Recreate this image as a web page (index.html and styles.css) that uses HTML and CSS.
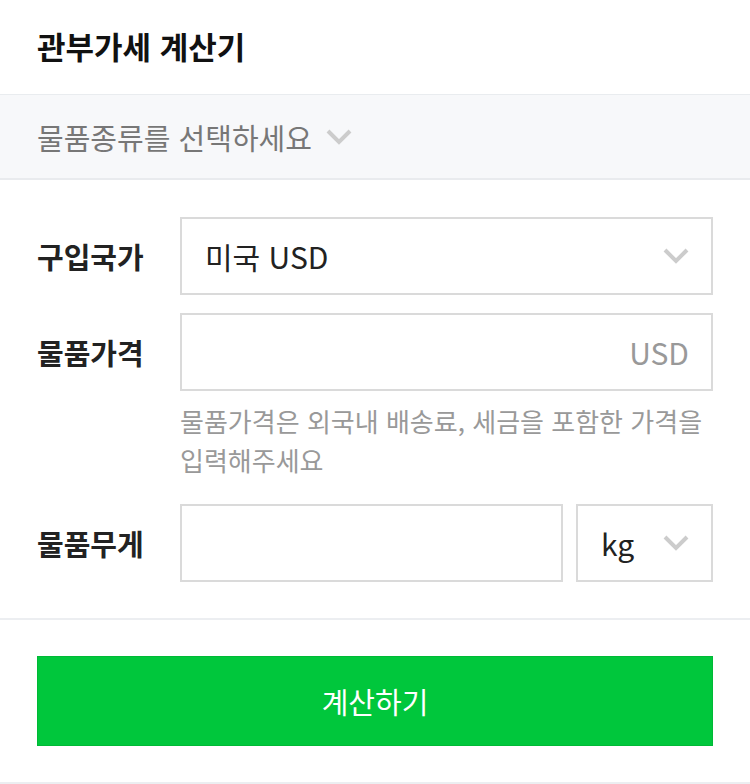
FILE: index.html
```html
<!DOCTYPE html>
<html lang="ko">
<head>
    <meta charset="UTF-8">
    <meta name="viewport" content="width=device-width, initial-scale=1.0">
    <title>관부가세 계산기</title>
    <link rel="stylesheet" href="styles.css">
</head>
<body>
    <header class="top">
        <h1>관부가세 계산기</h1>
    </header>

    <div class="category">
        <span>물품종류를 선택하세요</span>
        <svg class="chevron" width="26" height="16" viewBox="0 0 26 16"><path d="M2 2 L13 13 L24 2" fill="none" stroke="#cccccc" stroke-width="4"/></svg>
    </div>

    <section class="form">
        <div class="row">
            <label class="label">구입국가</label>
            <div class="box select">
                <span class="value">미국 USD</span>
                <svg class="chevron" width="26" height="16" viewBox="0 0 26 16"><path d="M2 2 L13 13 L24 2" fill="none" stroke="#cccccc" stroke-width="4"/></svg>
            </div>
        </div>

        <div class="row">
            <label class="label">물품가격</label>
            <div class="box input">
                <span class="unit">USD</span>
            </div>
        </div>
        <p class="help">물품가격은 외국내 배송료, 세금을 포함한 가격을 입력해주세요</p>

        <div class="row">
            <label class="label">물품무게</label>
            <div class="weight">
                <div class="box input"></div>
                <div class="box select small">
                    <span class="value">kg</span>
                    <svg class="chevron" width="26" height="16" viewBox="0 0 26 16"><path d="M2 2 L13 13 L24 2" fill="none" stroke="#cccccc" stroke-width="4"/></svg>
                </div>
            </div>
        </div>
    </section>

    <div class="actions">
        <button class="calc">계산하기</button>
    </div>
</body>
</html>
```

FILE: styles.css
```css
* {
    margin: 0;
    padding: 0;
    box-sizing: border-box;
    font-family: "Noto Sans CJK KR", "Noto Sans", sans-serif;
}

body {
    background: #fff;
    color: #222;
}

.top {
    height: 95px;
    padding: 0 37px;
    display: flex;
    align-items: center;
    border-bottom: 1px solid #e9ecef;
}

.top h1 {
    font-size: 31px;
    font-weight: 700;
    color: #111;
    margin-top: -4px;
}

.category {
    height: 85px;
    padding: 0 37px;
    background: #f7f8fa;
    border-bottom: 2px solid #e9ebee;
    display: flex;
    align-items: center;
    gap: 14px;
    color: #777;
    font-size: 29px;
}

.form {
    padding: 37px 37px 36px;
    border-bottom: 2px solid #eceef1;
}

.row {
    display: flex;
    align-items: center;
    margin-bottom: 18px;
}

.row:last-child {
    margin-bottom: 0;
}

.label {
    width: 143px;
    flex-shrink: 0;
    font-size: 29px;
    font-weight: 700;
    color: #222;
}

.box {
    flex: 1;
    height: 78px;
    border: 2px solid #dadada;
    background: #fff;
    display: flex;
    align-items: center;
    padding: 0 22px 0 23px;
    font-size: 30px;
}

.select {
    justify-content: space-between;
}

.input {
    justify-content: flex-end;
}

.unit {
    color: #999;
}

.weight {
    flex: 1;
    display: flex;
    gap: 13px;
}

.weight .small {
    flex: 0 0 137px;
}

.help {
    margin: -8px 0 25px 143px;
    font-size: 26px;
    line-height: 39px;
    color: #999;
}

.actions {
    padding: 36px 37px 36px;
    border-bottom: 2px solid #eceef1;
}

.calc {
    width: 100%;
    height: 90px;
    border: 1px solid #00b936;
    background: #00c73c;
    color: #fff;
    font-size: 29px;
    font-weight: 400;
    font-family: "Noto Sans CJK KR", sans-serif;
}
```
